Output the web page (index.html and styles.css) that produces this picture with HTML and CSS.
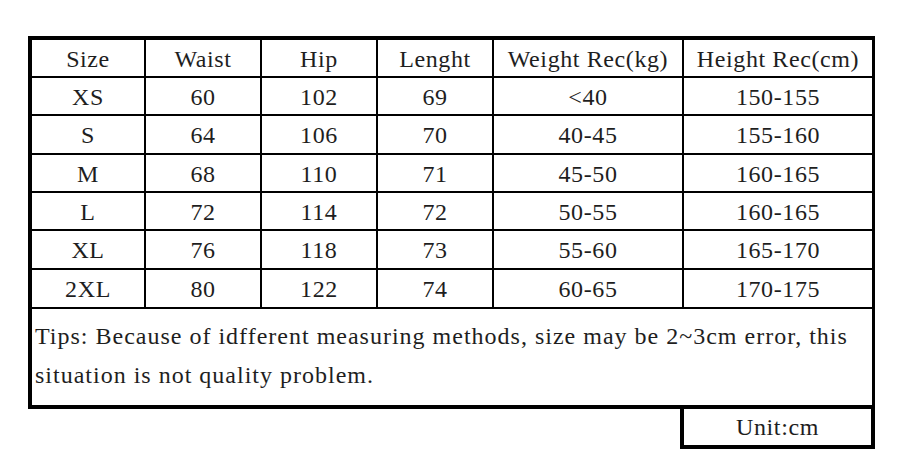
FILE: index.html
```html
<!DOCTYPE html>
<html>
<head>
<meta charset="utf-8">
<link rel="stylesheet" href="styles.css">
</head>
<body>
<div class="page">
  <div class="chart">
    <div class="grid">
      <div class="cell">Size</div>
      <div class="cell">Waist</div>
      <div class="cell">Hip</div>
      <div class="cell">Lenght</div>
      <div class="cell">Weight Rec(kg)</div>
      <div class="cell">Height Rec(cm)</div>

      <div class="cell">XS</div>
      <div class="cell">60</div>
      <div class="cell">102</div>
      <div class="cell">69</div>
      <div class="cell">&lt;40</div>
      <div class="cell">150-155</div>

      <div class="cell">S</div>
      <div class="cell">64</div>
      <div class="cell">106</div>
      <div class="cell">70</div>
      <div class="cell">40-45</div>
      <div class="cell">155-160</div>

      <div class="cell">M</div>
      <div class="cell">68</div>
      <div class="cell">110</div>
      <div class="cell">71</div>
      <div class="cell">45-50</div>
      <div class="cell">160-165</div>

      <div class="cell">L</div>
      <div class="cell">72</div>
      <div class="cell">114</div>
      <div class="cell">72</div>
      <div class="cell">50-55</div>
      <div class="cell">160-165</div>

      <div class="cell">XL</div>
      <div class="cell">76</div>
      <div class="cell">118</div>
      <div class="cell">73</div>
      <div class="cell">55-60</div>
      <div class="cell">165-170</div>

      <div class="cell">2XL</div>
      <div class="cell">80</div>
      <div class="cell">122</div>
      <div class="cell">74</div>
      <div class="cell">60-65</div>
      <div class="cell">170-175</div>

      <div class="tips">Tips: Because of idfferent measuring methods, size may be 2~3cm error, this<br>situation is not quality problem.</div>
    </div>
  </div>
  <div class="unit-row">
    <div class="unit">Unit:cm</div>
  </div>
</div>
</body>
</html>
```

FILE: styles.css
```css
html, body {
  margin: 0;
  padding: 0;
  background: #ffffff;
}

.page {
  padding: 36px 0 0 28px;
  width: 847px;
  font-family: "Liberation Serif", "Times New Roman", serif;
  color: #1e1e1e;
}

.chart {
  border: 4px solid #000;
}

.grid {
  display: grid;
  grid-template-columns: 112px 114px 114px 114px 188px 188px;
  grid-template-rows: 36px 36px 37px 36px 36px 37px 37px 96px;
  gap: 2px;
  background: #000;
}

.cell {
  background: #fff;
  display: flex;
  align-items: center;
  justify-content: center;
  font-size: 24px;
  letter-spacing: 0.6px;
  padding-top: 2px;
  box-sizing: border-box;
  white-space: nowrap;
}

.tips {
  grid-column: 1 / -1;
  background: #fff;
  font-size: 24px;
  line-height: 39px;
  padding: 8px 0 0 3px;
  box-sizing: border-box;
  letter-spacing: 1px;
  white-space: nowrap;
}

.unit-row {
  display: flex;
  justify-content: flex-end;
}

.unit {
  width: 187px;
  height: 36px;
  border: 4px solid #000;
  border-top: none;
  display: flex;
  align-items: center;
  justify-content: center;
  font-size: 24px;
  letter-spacing: 0.6px;
}
```
